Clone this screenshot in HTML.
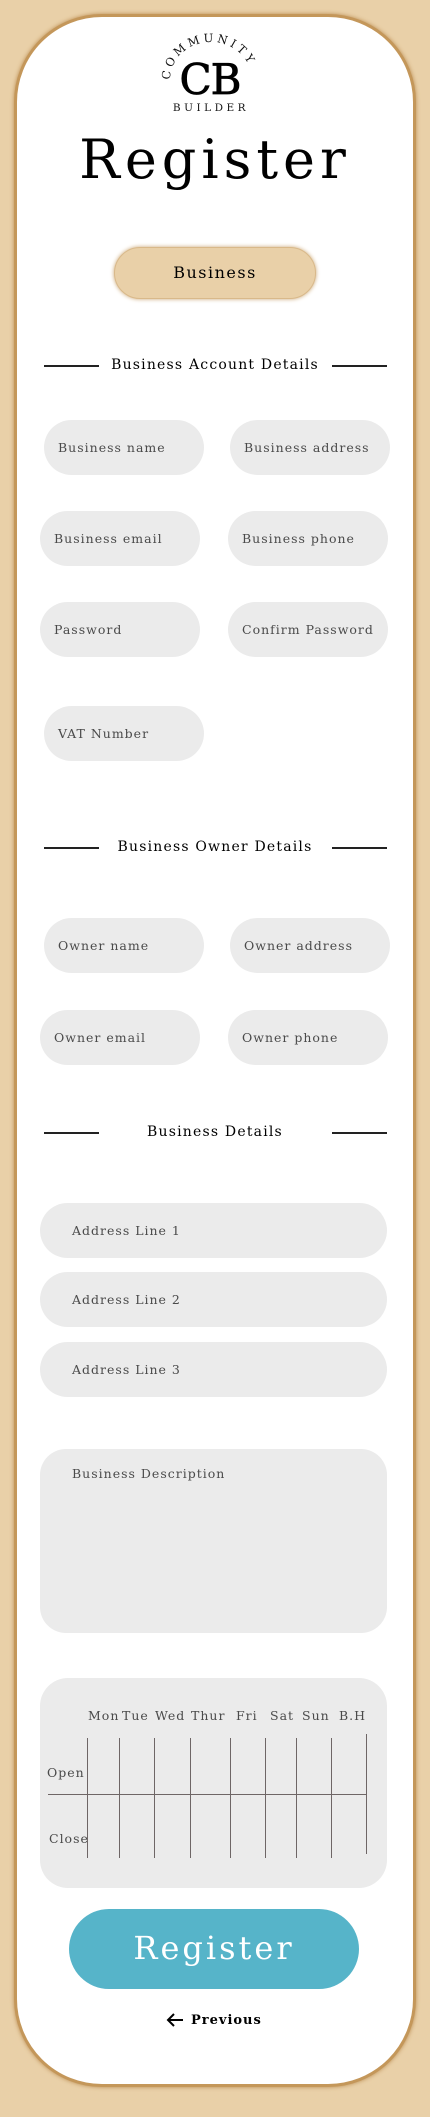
<!DOCTYPE html>
<html><head><meta charset="utf-8"><style>
*{margin:0;padding:0;box-sizing:border-box}
body{width:430px;height:2117px;background:#e9d0a8;position:relative;overflow:hidden;font-family:"DejaVu Serif","Liberation Serif",serif}
.card{position:absolute;left:14px;top:14px;width:402px;height:2073px;background:#fff;border:3px solid #c4975a;border-radius:88px;box-shadow:0 0 4px #b98a4e}
.a{position:absolute}
.f{position:absolute;background:#ebebeb;border-radius:28px;height:55px;font-size:12.5px;color:#4a4a4a;letter-spacing:1px;padding-left:14px;display:flex;align-items:center}
.h{position:absolute;left:0;width:430px;text-align:center;font-size:14px;letter-spacing:1.2px;color:#000}
.ln{position:absolute;height:1.5px;background:#222;width:55px}
.v{position:absolute;width:1.3px;background:#6e6666}
.d{position:absolute;font-size:12.5px;color:#4a4a4a;letter-spacing:1px}
</style></head><body>
<div class="card"></div>
<svg class="a" style="left:160px;top:30px" width="100" height="85" viewBox="0 0 100 85">
<defs><path id="arc" d="M10 50 A41 38 0 0 1 92 50"/></defs>
<text font-family="DejaVu Serif,serif" font-size="11.5" letter-spacing="3.2" fill="#111"><textPath href="#arc">COMMUNITY</textPath></text>
<text x="50" y="64" text-anchor="middle" font-family="DejaVu Serif,serif" font-size="42" fill="#000" stroke="#000" stroke-width="0.8" letter-spacing="-1">CB</text>
<text x="51" y="81" text-anchor="middle" font-family="DejaVu Serif,serif" font-size="10.5" letter-spacing="3.5" fill="#111">BUILDER</text>
</svg>
<div class="a" style="left:0;width:430px;top:128px;text-align:center;font-size:54px;letter-spacing:5px;color:#000">Register</div>
<div class="a" style="left:114px;top:247px;width:202px;height:52px;background:#e9d0a8;border-radius:26px;border:1.5px solid #d9b98a;box-shadow:0 0 4px #c9a36e;text-align:center;line-height:49px;font-size:16px;letter-spacing:1.5px">Business</div>

<div class="ln" style="left:44px;top:365px"></div><div class="ln" style="left:332px;top:365px"></div>
<div class="h" style="top:357px">Business Account Details</div>
<div class="f" style="left:44px;top:420px;width:160px">Business name</div>
<div class="f" style="left:230px;top:420px;width:160px">Business address</div>
<div class="f" style="left:40px;top:511px;width:160px">Business email</div>
<div class="f" style="left:228px;top:511px;width:160px">Business phone</div>
<div class="f" style="left:40px;top:602px;width:160px">Password</div>
<div class="f" style="left:228px;top:602px;width:160px">Confirm Password</div>
<div class="f" style="left:44px;top:706px;width:160px">VAT Number</div>

<div class="ln" style="left:44px;top:847px"></div><div class="ln" style="left:332px;top:847px"></div>
<div class="h" style="top:839px">Business Owner Details</div>
<div class="f" style="left:44px;top:918px;width:160px">Owner name</div>
<div class="f" style="left:230px;top:918px;width:160px">Owner address</div>
<div class="f" style="left:40px;top:1010px;width:160px">Owner email</div>
<div class="f" style="left:228px;top:1010px;width:160px">Owner phone</div>

<div class="ln" style="left:44px;top:1132px"></div><div class="ln" style="left:332px;top:1132px"></div>
<div class="h" style="top:1124px">Business Details</div>
<div class="f" style="left:40px;top:1203px;width:347px;padding-left:32px">Address Line 1</div>
<div class="f" style="left:40px;top:1272px;width:347px;padding-left:32px">Address Line 2</div>
<div class="f" style="left:40px;top:1342px;width:347px;padding-left:32px">Address Line 3</div>
<div class="f" style="left:40px;top:1449px;width:347px;height:184px;border-radius:26px;padding-left:32px;align-items:flex-start;padding-top:17px">Business Description</div>

<div class="a" style="left:40px;top:1678px;width:347px;height:210px;background:#ebebeb;border-radius:28px"></div>
<div class="d" style="left:88px;top:1708px">Mon</div>
<div class="d" style="left:122px;top:1708px">Tue</div>
<div class="d" style="left:155px;top:1708px">Wed</div>
<div class="d" style="left:191px;top:1708px">Thur</div>
<div class="d" style="left:236px;top:1708px">Fri</div>
<div class="d" style="left:270px;top:1708px">Sat</div>
<div class="d" style="left:302px;top:1708px">Sun</div>
<div class="d" style="left:339px;top:1708px">B.H</div>
<div class="d" style="left:47px;top:1765px">Open</div>
<div class="d" style="left:49px;top:1831px">Close</div>
<div class="a" style="left:48px;top:1794px;width:318px;height:1.3px;background:#6e6666"></div>
<div class="v" style="left:87px;top:1738px;height:120px"></div>
<div class="v" style="left:119px;top:1738px;height:120px"></div>
<div class="v" style="left:154px;top:1738px;height:120px"></div>
<div class="v" style="left:190px;top:1738px;height:120px"></div>
<div class="v" style="left:230px;top:1738px;height:120px"></div>
<div class="v" style="left:265px;top:1738px;height:120px"></div>
<div class="v" style="left:296px;top:1738px;height:120px"></div>
<div class="v" style="left:331px;top:1738px;height:120px"></div>
<div class="v" style="left:366px;top:1734px;height:120px"></div>

<div class="a" style="left:69px;top:1909px;width:290px;height:80px;background:#56b4c9;border-radius:40px;color:#fff;text-align:center;line-height:78px;font-size:32px;letter-spacing:3px">Register</div>
<div class="a" style="left:166px;top:2012px;font-size:13px;font-weight:bold;letter-spacing:1px;color:#000;display:flex;align-items:center">
<svg width="18" height="16" viewBox="0 0 18 16" style="margin-right:7px"><path d="M17 8H2M8 2L2 8l6 6" fill="none" stroke="#000" stroke-width="2"/></svg>Previous</div>
</body></html>
